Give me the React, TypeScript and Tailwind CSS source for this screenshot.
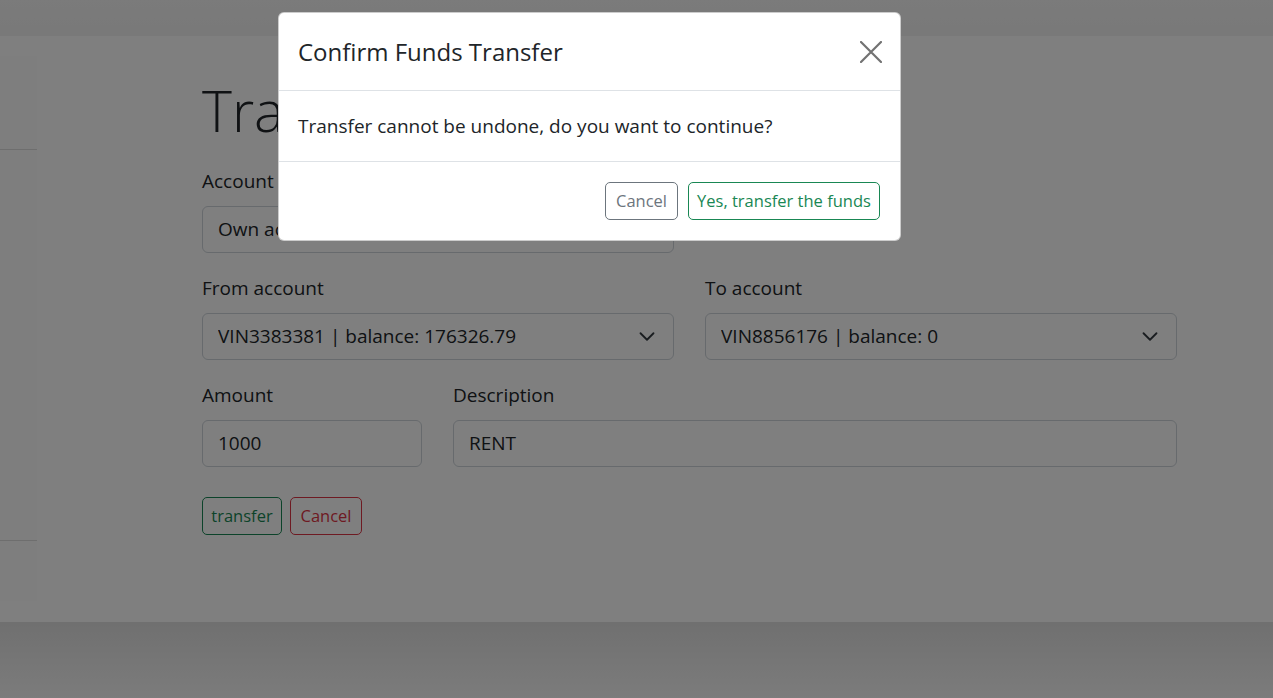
import React from 'react';

const Chevron = () => (
  <svg width="18" height="13" viewBox="0 0 16 12" fill="none" className="mr-[2px] shrink-0">
    <path d="m2 3 6 6 6-6" stroke="#343a40" strokeWidth="1.7" strokeLinecap="round" strokeLinejoin="round" />
  </svg>
);

function Field({ label, children }: { label: string; children: React.ReactNode }) {
  return (
    <div className="flex flex-col">
      <label className="mb-[10px] h-[30px] text-[19px] leading-[30px] text-[#212529]">{label}</label>
      {children}
    </div>
  );
}

function Select({ value }: { value: string }) {
  return (
    <div className="flex h-[47px] items-center justify-between rounded-[6px] border border-[#ced4da] bg-white pl-[15px] pr-[15px] text-[19px] text-[#212529]">
      <span className="truncate">{value}</span>
      <Chevron />
    </div>
  );
}

function Input({ value }: { value: string }) {
  return (
    <div className="flex h-[47px] items-center rounded-[6px] border border-[#ced4da] bg-white px-[15px] text-[19px] text-[#212529]">
      {value}
    </div>
  );
}

export default function App() {
  return (
    <div className="relative h-[698px] overflow-hidden bg-white font-['Open_Sans',sans-serif]">
      {/* top bar */}
      <div className="h-[36px] bg-gradient-to-b from-[#f6f6f6] to-[#f2f2f2]" />

      <div className="flex h-[586px]">
        {/* side panel */}
        <aside className="mt-[20px] flex h-[545px] w-[37px] flex-col bg-[#fcfcfc]">
          <div className="h-[94px] border-b border-[#dcdcdc]" />
          <div className="h-[391px] border-b border-[#dcdcdc]" />
        </aside>

        <main className="ml-[165px] w-[975px]">
          <h1 className="mt-[38px] mb-[20px] h-[72px] text-[57px] font-light leading-[72px] text-[#212529]">
            Transfer
          </h1>

          <div className="grid grid-cols-2 gap-x-[31px]">
            <Field label="Account type">
              <Select value="Own accounts" />
            </Field>
          </div>

          <div className="mt-[20px] grid grid-cols-2 gap-x-[31px]">
            <Field label="From account">
              <Select value="VIN3383381 | balance: 176326.79" />
            </Field>
            <Field label="To account">
              <Select value="VIN8856176 | balance: 0" />
            </Field>
          </div>

          <div className="mt-[20px] grid grid-cols-[220px_1fr] gap-x-[31px]">
            <Field label="Amount">
              <Input value="1000" />
            </Field>
            <Field label="Description">
              <Input value="RENT" />
            </Field>
          </div>

          <div className="mt-[30px] flex gap-[8px]">
            <button className="h-[38px] w-[80px] rounded-[5px] border border-[#198754] text-[16.5px] text-[#198754]">
              transfer
            </button>
            <button className="h-[38px] w-[72px] rounded-[5px] border border-[#dc3545] text-[16.5px] text-[#dc3545]">
              Cancel
            </button>
          </div>
        </main>
      </div>

      {/* footer */}
      <div className="h-[76px] bg-gradient-to-b from-[#e0e0e0] to-[#f8f8f8]" />

      {/* backdrop */}
      <div className="absolute inset-0 bg-black/50" />

      {/* modal */}
      <div className="absolute left-[278px] top-[12px] w-[623px] rounded-[6px] border border-black/20 bg-white">
        <div className="flex h-[78px] items-center justify-between border-b border-[#dee2e6] pl-[19px] pr-[18px]">
          <h5 className="text-[24px] font-medium leading-[37px] text-[#212529]">Confirm Funds Transfer</h5>
          <svg width="22" height="22" viewBox="0 0 22 22" className="opacity-55">
            <path d="M1 1 21 21M21 1 1 21" stroke="#000" strokeWidth="2.2" strokeLinecap="round" />
          </svg>
        </div>
        <div className="border-b border-[#dee2e6] px-[19px] py-[20px] text-[19px] leading-[30px] text-[#212529]">
          Transfer cannot be undone, do you want to continue?
        </div>
        <div className="flex h-[78px] items-center justify-end gap-[10px] pr-[20px]">
          <button className="h-[38px] w-[73px] rounded-[5px] border border-[#6c757d] text-[16.5px] text-[#6c757d]">
            Cancel
          </button>
          <button className="h-[38px] w-[192px] rounded-[5px] border border-[#198754] text-[16.5px] text-[#198754]">
            Yes, transfer the funds
          </button>
        </div>
      </div>
    </div>
  );
}
